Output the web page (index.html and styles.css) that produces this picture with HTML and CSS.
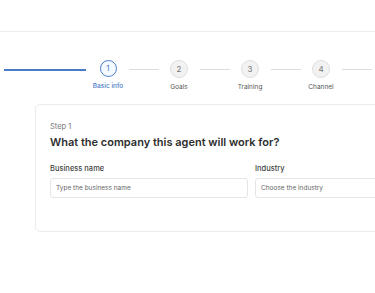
FILE: index.html
```html
<!DOCTYPE html>
<html lang="en">

<head>
  <meta charset="UTF-8">
  <meta name="viewport" content="width=device-width, initial-scale=1.0">
  <title>Create agent</title>
  <link rel="stylesheet" href="styles.css">
</head>

<body>
  <div class="topbar"></div>

  <div class="stepper">
    <span class="line line-first"></span>
    <div class="step active">
      <span class="dot">1</span>
      <span class="label">Basic info</span>
    </div>
    <span class="line"></span>
    <div class="step">
      <span class="dot">2</span>
      <span class="label">Goals</span>
    </div>
    <span class="line"></span>
    <div class="step">
      <span class="dot">3</span>
      <span class="label">Training</span>
    </div>
    <span class="line"></span>
    <div class="step">
      <span class="dot">4</span>
      <span class="label">Channel</span>
    </div>
    <span class="line"></span>
  </div>

  <div class="card">
    <p class="step-no">Step 1</p>
    <h2 class="title">What the company this agent will work for?</h2>
    <div class="fields">
      <label class="field">
        <span class="field-label">Business name</span>
        <input type="text" placeholder="Type the business name">
      </label>
      <label class="field">
        <span class="field-label">Industry</span>
        <input type="text" placeholder="Choose the industry">
      </label>
    </div>
  </div>
</body>

</html>
```

FILE: styles.css
```css
html,
body {
  overflow: hidden;
}

body {
  margin: 0;
  background: #fff;
  font-family: Inter, "Noto Sans", sans-serif;
  color: #2b2b2b;
}

.topbar {
  height: 31px;
  border-bottom: 1px solid #ececec;
}

/* ---------- stepper ---------- */
.stepper {
  display: flex;
  align-items: flex-start;
  margin-top: 28px;
  padding-left: 4px;
}

.line {
  width: 30px;
  height: 1px;
  margin: 9px 11px 0 12px;
  background: #dcdcdc;
  flex-shrink: 0;
}

.line-first {
  width: 82px;
  height: 2px;
  margin: 9px 13px 0 0;
  background: #4a7bc8;
}

.step {
  width: 18px;
  display: flex;
  flex-direction: column;
  align-items: center;
  flex-shrink: 0;
}

.dot {
  width: 16px;
  height: 16px;
  border: 1px solid #dedede;
  border-radius: 50%;
  background: #f2f2f2;
  color: #777;
  font-size: 8px;
  line-height: 16px;
  text-align: center;
}

.label {
  margin-top: 5px;
  white-space: nowrap;
  font-size: 6.5px;
  color: #555;
}

.step.active .dot {
  width: 15px;
  height: 15px;
  border: 1.5px solid #4a7bc8;
  background: #f4f8ff;
  color: #4a7bc8;
  line-height: 15px;
}

.step.active .label {
  color: #4a7bc8;
  font-weight: 500;
}

/* ---------- card ---------- */
.card {
  width: 420px;
  margin: 13px 0 0 35px;
  padding: 17px 14px 33px;
  border: 1px solid #ebebeb;
  border-radius: 5px;
}

.step-no {
  margin: 0;
  font-size: 7.5px;
  color: #777;
}

.title {
  margin: 4px 0 0;
  font-size: 11px;
  font-weight: 600;
  color: #2e2e2e;
}

.fields {
  display: grid;
  grid-template-columns: 198px 198px;
  gap: 7px;
  margin-top: 15px;
}

.field {
  display: flex;
  flex-direction: column;
}

.field-label {
  font-size: 7.5px;
  color: #444;
  font-weight: 500;
}

.field input {
  height: 18px;
  margin-top: 5px;
  padding: 0 5px;
  border: 1px solid #e6e6e6;
  border-radius: 3px;
  outline: none;
  font-family: inherit;
  font-size: 6.5px;
  color: #333;
}

.field input::placeholder {
  color: #666;
}
```
